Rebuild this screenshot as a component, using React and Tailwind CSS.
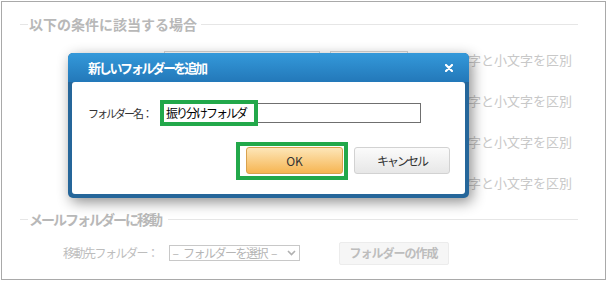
const font = { fontFamily: '"Noto Sans CJK JP", "Noto Sans", sans-serif' };

const ConditionRow = ({ label }) => (
    <div className="flex items-center h-[41px]">
        <div className="w-[141px] text-right text-[13px] text-[#c8c8c8] tracking-[-1px]">{label}</div>
        <div className="ml-[3px] w-[156px] h-[17px] border border-[#d6d6d6] bg-white"></div>
        <div className="ml-[10px] w-[78px] h-[17px] border border-[#d6d6d6] bg-white"></div>
        <div className="ml-[18px] w-[13px] h-[13px] border border-[#d6d6d6]"></div>
        <div className="ml-[3px] text-[13px] text-[#c8c8c8]">大文字と小文字を区別</div>
    </div>
);

const App = () => {
    return (
        <div className="w-[608px] h-[281px] bg-white" style={font}>
            <div className="relative ml-px mt-px w-[605px] h-[279px] border border-[#a9a9a9] bg-white overflow-hidden">
                {/* Section 1 */}
                <div className="pl-[18px] pr-[27px] pt-[12px]">
                    <div className="flex items-center h-[20px]">
                        <div className="w-[8px] h-px bg-[#e6e6e6]"></div>
                        <div className="px-[1px] text-[14px] font-bold text-[#b8b8b8] leading-none">以下の条件に該当する場合</div>
                        <div className="flex-1 ml-[3px] h-px bg-[#e6e6e6]"></div>
                    </div>
                    <div className="mt-[5px]">
                        <ConditionRow label="キーワード" />
                        <ConditionRow label="差出人" />
                        <ConditionRow label="宛先" />
                        <ConditionRow label="件名" />
                    </div>
                </div>

                {/* Section 2 */}
                <div className="pl-[18px] pr-[27px] mt-[6px]">
                    <div className="flex items-center h-[20px]">
                        <div className="w-[8px] h-px bg-[#e6e6e6]"></div>
                        <div className="px-[1px] text-[14px] font-bold text-[#b8b8b8] leading-none tracking-[-2px]">メールフォルダーに移動</div>
                        <div className="flex-1 ml-[6px] h-px bg-[#e6e6e6]"></div>
                    </div>
                    <div className="flex items-center h-[28px] mt-[10px]">
                        <div className="ml-[43px] text-[12px] text-[#bdbdbd] tracking-[-1.5px]">移動先フォルダー：</div>
                        <div className="ml-[11px] w-[131px] h-[16px] border border-[#c8c8c8] flex items-center pl-[3px] pr-[3px] text-[12px] text-[#b5b5b5] leading-none">
                            <span>–</span>
                            <span className="ml-[4px] tracking-[-1.5px]">フォルダーを選択</span>
                            <span className="ml-[4px]">–</span>
                            <svg width="9" height="6" viewBox="0 0 9 6" className="ml-auto">
                                <path d="M1 1 L4.5 4.5 L8 1" fill="none" stroke="#b0b0b0" strokeWidth="1.6" />
                            </svg>
                        </div>
                        <div className="ml-[39px] w-[110px] h-[23px] rounded-[2px] border border-[#ececec] bg-[#f6f6f6] flex items-center justify-center text-[12px] font-bold text-[#bdbdbd] tracking-[-1px]">
                            フォルダーの作成
                        </div>
                    </div>
                </div>

                {/* Dialog overlay */}
                <div className="absolute left-[66px] top-[51px] w-[401px] h-[145px] rounded-[5px] bg-[#25669a] shadow-[3px_4px_14px_rgba(0,0,0,0.45)] flex flex-col">
                    <div className="h-[29px] rounded-t-[5px] bg-[linear-gradient(#3499da,#2378b9)] flex items-center justify-between pl-[20px] pr-[16px]">
                        <span className="text-[13px] font-bold text-white tracking-[-2.3px]">新しいフォルダーを追加</span>
                        <svg width="8" height="8" viewBox="0 0 8 8">
                            <path d="M1 1 L7 7 M7 1 L1 7" stroke="white" strokeWidth="2.2" strokeLinecap="round" />
                        </svg>
                    </div>
                    <div className="relative flex-1 mx-[4px] mb-[4px] rounded-[3px] bg-white">
                        <div className="flex items-center mt-[21px] h-[20px]">
                            <span className="ml-[16px] w-[70px] shrink-0 text-[11px] text-[#333] tracking-[-2px]">フォルダー名：</span>
                            <div className="ml-[2px] w-[261px] h-[20px] border border-[#6f6f6f] flex items-center pl-[5px] text-[12px] text-black tracking-[-2px]">
                                振り分けフォルダ
                            </div>
                        </div>
                        <div className="absolute left-[88px] top-[18px] w-[98px] h-[26px] border-4 border-[#22a84a]"></div>

                        <div className="flex justify-end pr-[15px] mt-[24px] gap-[11px]">
                            <button className="w-[97px] h-[27px] rounded-[3px] border border-[#d9a24e] bg-[linear-gradient(#fde6b8,#f6b552)] text-[12px] text-[#333]">
                                OK
                            </button>
                            <button className="w-[96px] h-[27px] rounded-[3px] border border-[#d2d2d2] bg-[linear-gradient(#fbfbfb,#e7e7e7)] text-[12px] text-[#333] tracking-[-2px]">
                                キャンセル
                            </button>
                        </div>
                        <div className="absolute left-[164px] top-[60px] w-[112px] h-[38px] border-4 border-[#22a84a]"></div>
                    </div>
                </div>
            </div>
        </div>
    );
};

export default App;
